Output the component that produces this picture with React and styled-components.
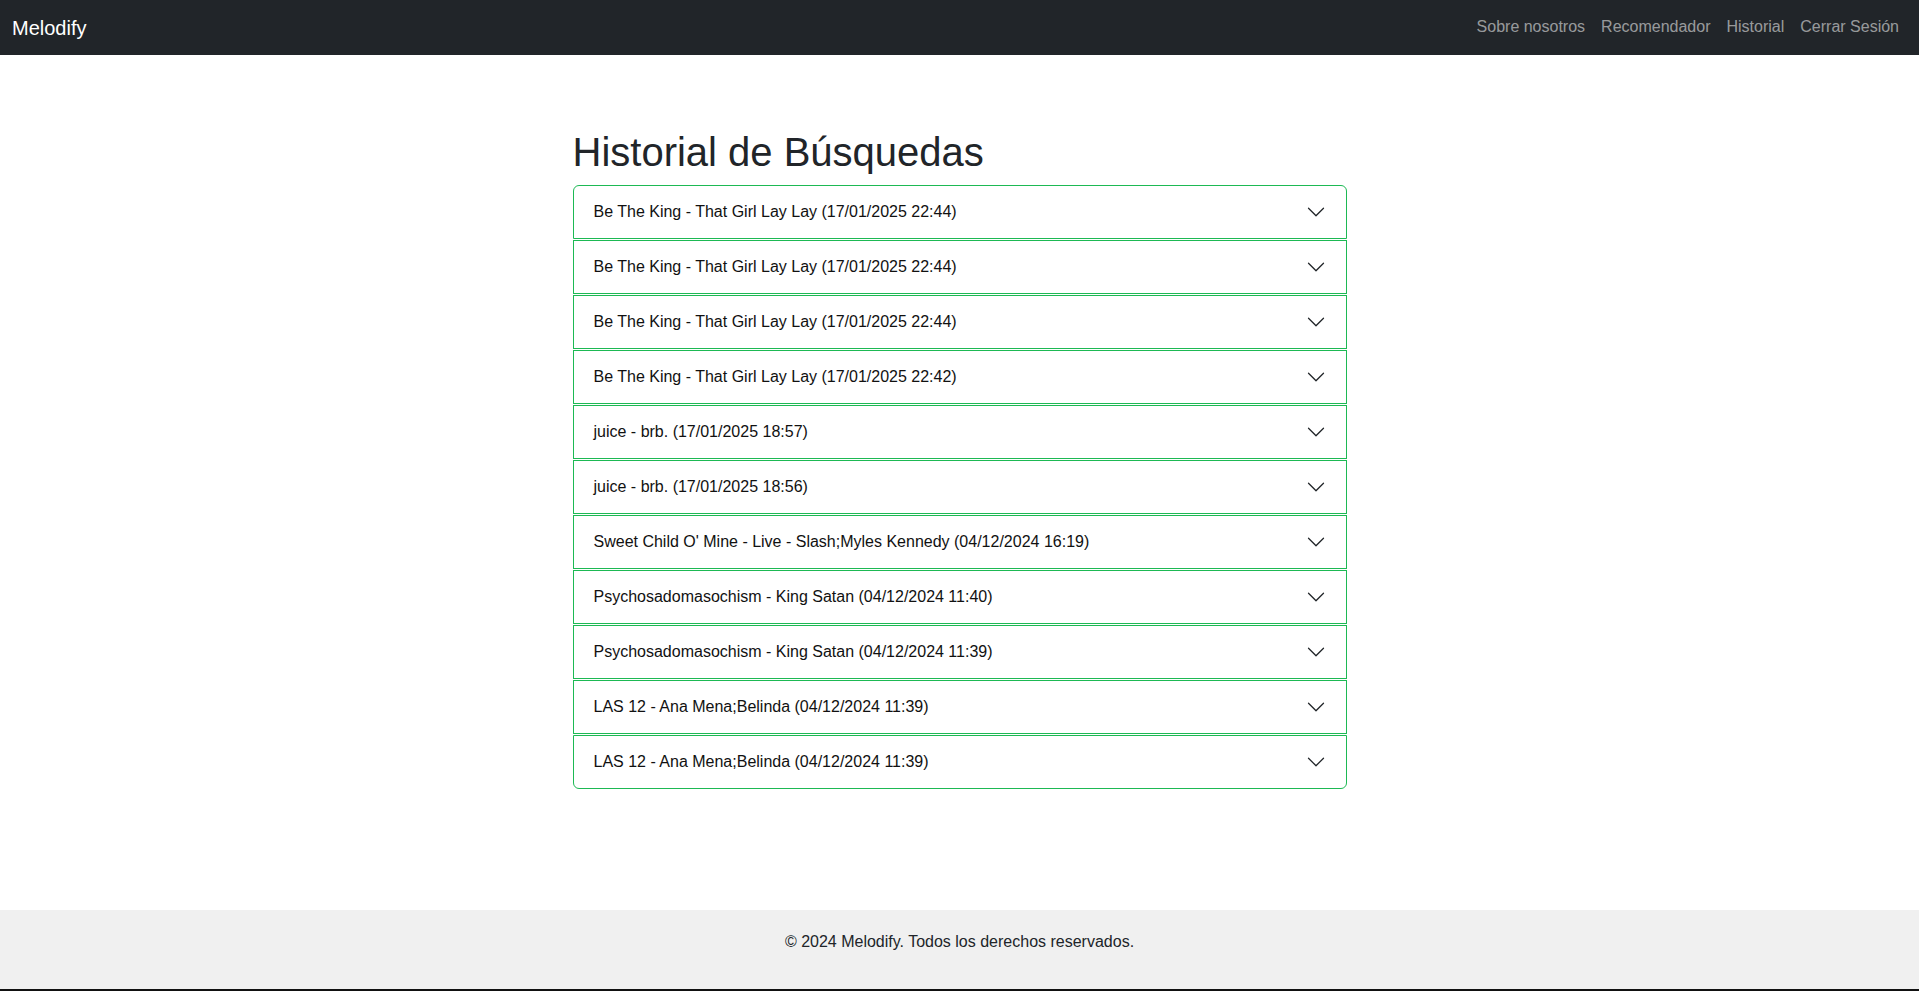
import React from "react";
import styled, { createGlobalStyle } from "styled-components";

const GlobalStyle = createGlobalStyle`
  *, *::before, *::after { box-sizing: border-box; }
  html, body { margin: 0; padding: 0; }
  body {
    font-family: "Liberation Sans", Arial, Helvetica, sans-serif;
    font-size: 16px;
    line-height: 1.5;
    color: #212529;
    background: #fff;
  }
`;

const Page = styled.div`
  min-height: 991px;
  display: flex;
  flex-direction: column;
`;

const NavBar = styled.nav`
  height: 55px;
  background: #212529;
  display: flex;
  align-items: center;
  justify-content: space-between;
  padding: 0 12px;
`;

const Brand = styled.a`
  color: #fff;
  font-size: 20px;
  line-height: 30px;
  text-decoration: none;
`;

const NavLinks = styled.ul`
  display: flex;
  list-style: none;
  margin: -1px 0 0;
  padding: 0;
`;

const NavLink = styled.a`
  display: block;
  padding: 8px 8px;
  color: rgba(255, 255, 255, 0.55);
  text-decoration: none;
  font-size: 16px;
  line-height: 24px;
`;

const Main = styled.main`
  flex: 1;
  padding-top: 73px;
`;

const Container = styled.div`
  max-width: 774px;
  margin: 0 auto;
`;

const Title = styled.h1`
  font-size: 40px;
  font-weight: 400;
  line-height: 48px;
  margin: 0 0 9px;
  color: #212529;
`;

const Accordion = styled.div`
  display: flex;
  flex-direction: column;
  gap: 1px;
`;

const Item = styled.div`
  border: 1px solid #1db954;
  background: #fff;
  border-radius: ${(p) =>
    p.$first ? "6px 6px 0 0" : p.$last ? "0 0 6px 6px" : "0"};
`;

const ItemButton = styled.button`
  width: 100%;
  height: 52px;
  display: flex;
  align-items: center;
  justify-content: space-between;
  padding: 0 20px;
  border: 0;
  background: transparent;
  font-family: inherit;
  font-size: 16px;
  line-height: 24px;
  color: #111;
  text-align: left;
  cursor: pointer;
`;

const Chevron = styled.svg`
  width: 20px;
  height: 20px;
  flex-shrink: 0;
  fill: #212529;
`;

const Footer = styled.footer`
  background: #f0f0f0;
  padding: 20px 0 0;
  height: 81px;
  text-align: center;
  border-bottom: 2px solid #111;
`;

const FooterText = styled.p`
  margin: 0 0 16px;
  font-size: 16px;
  line-height: 24px;
  color: #212529;
`;

const items = [
  "Be The King - That Girl Lay Lay (17/01/2025 22:44)",
  "Be The King - That Girl Lay Lay (17/01/2025 22:44)",
  "Be The King - That Girl Lay Lay (17/01/2025 22:44)",
  "Be The King - That Girl Lay Lay (17/01/2025 22:42)",
  "juice - brb. (17/01/2025 18:57)",
  "juice - brb. (17/01/2025 18:56)",
  "Sweet Child O' Mine - Live - Slash;Myles Kennedy (04/12/2024 16:19)",
  "Psychosadomasochism - King Satan (04/12/2024 11:40)",
  "Psychosadomasochism - King Satan (04/12/2024 11:39)",
  "LAS 12 - Ana Mena;Belinda (04/12/2024 11:39)",
  "LAS 12 - Ana Mena;Belinda (04/12/2024 11:39)",
];

const ChevronIcon = () => (
  <Chevron viewBox="0 0 16 16">
    <path
      fillRule="evenodd"
      d="M1.646 4.646a.5.5 0 0 1 .708 0L8 10.293l5.646-5.647a.5.5 0 0 1 .708.708l-6 6a.5.5 0 0 1-.708 0l-6-6a.5.5 0 0 1 0-.708z"
    />
  </Chevron>
);

export default function App() {
  return (
    <Page>
      <GlobalStyle />
      <NavBar>
        <Brand href="#">Melodify</Brand>
        <NavLinks>
          <li><NavLink href="#">Sobre nosotros</NavLink></li>
          <li><NavLink href="#">Recomendador</NavLink></li>
          <li><NavLink href="#">Historial</NavLink></li>
          <li><NavLink href="#">Cerrar Sesión</NavLink></li>
        </NavLinks>
      </NavBar>
      <Main>
        <Container>
          <Title>Historial de Búsquedas</Title>
          <Accordion>
            {items.map((text, i) => (
              <Item key={i} $first={i === 0} $last={i === items.length - 1}>
                <ItemButton type="button">
                  <span>{text}</span>
                  <ChevronIcon />
                </ItemButton>
              </Item>
            ))}
          </Accordion>
        </Container>
      </Main>
      <Footer>
        <FooterText>© 2024 Melodify. Todos los derechos reservados.</FooterText>
      </Footer>
    </Page>
  );
}
